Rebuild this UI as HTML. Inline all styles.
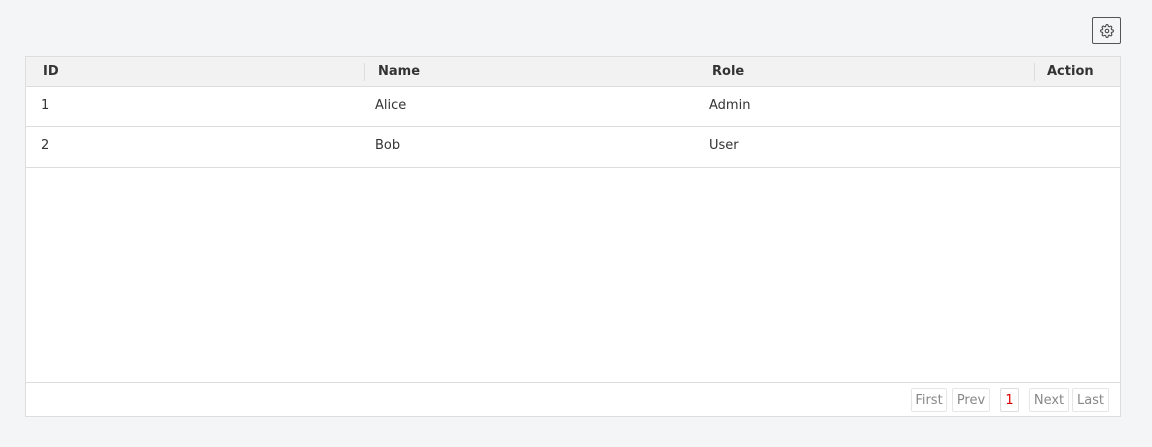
<!DOCTYPE html>
<html><head><style>
*{box-sizing:border-box;margin:0;padding:0}
body{width:1152px;height:447px;background:#f4f5f7;font-family:"DejaVu Sans",sans-serif;font-size:13px;color:#333;position:relative;overflow:hidden}
.abs{position:absolute}
.gear{left:1092px;top:17px;width:29px;height:27px;border:1px solid #555;border-radius:2px;background:#f4f5f7;display:flex;align-items:center;justify-content:center}
.box{left:25px;top:56px;width:1096px;height:361px;background:#fff;border:1px solid #ddd}
.hdr{left:0;top:0;width:1094px;height:30px;background:#f2f2f2;border-bottom:1px solid #ddd}
.th{font-weight:bold;top:7px;color:#333}
.sep{top:6px;width:1px;height:18px;background:#ddd}
.row{left:0;width:1094px;height:40px;border-bottom:1px solid #ddd}
.td{top:11px}
.foot{left:0;top:325px;width:1094px;border-top:1px solid #ddd;height:34px}
.pb{top:5px;height:24px;border:1px solid #e6e6e6;border-radius:2px;color:#888;display:flex;align-items:center;justify-content:center}
</style></head><body>
<div class="abs gear"><svg width="14" height="14" viewBox="0 0 24 24" fill="none" stroke="#444" stroke-width="1.8"><circle cx="12" cy="12" r="3"/><path d="M19.4 15a1.65 1.65 0 0 0 .33 1.82l.06.06a2 2 0 1 1-2.83 2.83l-.06-.06a1.65 1.65 0 0 0-1.82-.33 1.65 1.65 0 0 0-1 1.51V21a2 2 0 1 1-4 0v-.09A1.65 1.65 0 0 0 9 19.4a1.65 1.65 0 0 0-1.82.33l-.06.06a2 2 0 1 1-2.83-2.83l.06-.06A1.65 1.65 0 0 0 4.68 15a1.65 1.65 0 0 0-1.51-1H3a2 2 0 1 1 0-4h.09A1.65 1.65 0 0 0 4.6 9a1.65 1.65 0 0 0-.33-1.82l-.06-.06a2 2 0 1 1 2.83-2.83l.06.06A1.65 1.65 0 0 0 9 4.68a1.65 1.65 0 0 0 1-1.51V3a2 2 0 1 1 4 0v.09a1.65 1.65 0 0 0 1 1.51 1.65 1.65 0 0 0 1.82-.33l.06-.06a2 2 0 1 1 2.83 2.83l-.06.06A1.65 1.65 0 0 0 19.4 9a1.65 1.65 0 0 0 1.51 1H21a2 2 0 1 1 0 4h-.09a1.65 1.65 0 0 0-1.51 1z"/></svg></div>
<div class="abs box">
 <div class="abs hdr">
  <div class="abs th" style="left:17px">ID</div>
  <div class="abs sep" style="left:338px"></div>
  <div class="abs th" style="left:352px">Name</div>
  <div class="abs th" style="left:686px">Role</div>
  <div class="abs sep" style="left:1008px"></div>
  <div class="abs th" style="left:1021px">Action</div>
 </div>
 <div class="abs row" style="top:30px">
  <div class="abs td" style="left:15px">1</div>
  <div class="abs td" style="left:349px">Alice</div>
  <div class="abs td" style="left:683px">Admin</div>
 </div>
 <div class="abs row" style="top:70px;height:41px">
  <div class="abs td" style="left:15px">2</div>
  <div class="abs td" style="left:349px">Bob</div>
  <div class="abs td" style="left:683px">User</div>
 </div>
 <div class="abs foot">
  <div class="abs pb" style="left:885px;width:36px">First</div>
  <div class="abs pb" style="left:926px;width:38px">Prev</div>
  <div class="abs pb" style="left:974px;width:19px;color:#d00;border-color:#ddd">1</div>
  <div class="abs pb" style="left:1003px;width:40px">Next</div>
  <div class="abs pb" style="left:1046px;width:37px">Last</div>
 </div>
</div>
</body></html>
